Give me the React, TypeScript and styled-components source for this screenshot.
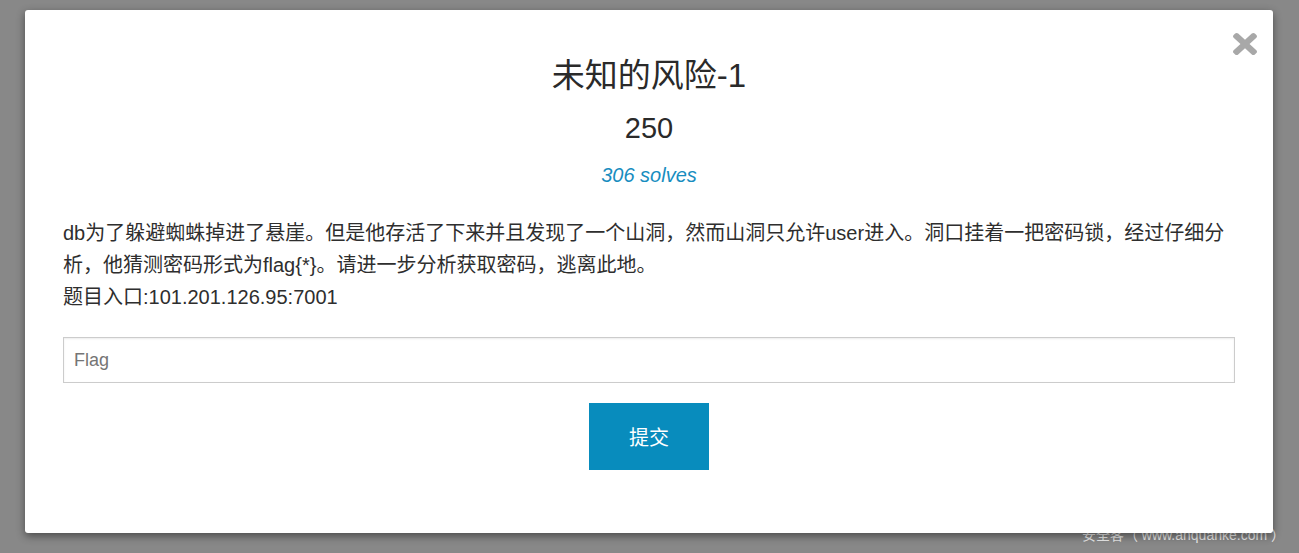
import styled, { createGlobalStyle } from "styled-components";

const GlobalStyle = createGlobalStyle`
	html,
	body {
		margin: 0;
		padding: 0;
		background: #888888;
		font-family: "Liberation Sans", Arial, "Noto Sans CJK SC", sans-serif;
		color: #333333;
	}
`;

const StyledBackdrop = styled.div`
	position: relative;
	min-height: 553px;
	padding: 10px 26px 20px 25px;
	box-sizing: border-box;
	overflow: hidden;
`;

const StyledModal = styled.div`
	position: relative;
	z-index: 2;

	width: 1248px;
	height: 523px;
	box-sizing: border-box;
	padding: 46px 38px 0 38px;

	background: #ffffff;
	border-radius: 3px;
	box-shadow: 0 3px 9px rgba(0, 0, 0, 0.45);

	display: flex;
	flex-direction: column;
	align-items: stretch;
`;

const StyledClose = styled.button`
	position: absolute;
	top: 23px;
	right: 16px;

	width: 24px;
	height: 22px;
	padding: 0;
	border: none;
	background: transparent;
	cursor: pointer;

	svg {
		display: block;
		width: 24px;
		height: 22px;
	}
`;

const StyledTitle = styled.h2`
	margin: 0;
	font-size: 33px;
	line-height: 40px;
	font-weight: normal;
	text-align: center;
	color: #2a2a2a;
`;

const StyledValue = styled.h3`
	margin: 14px 0 0 0;
	font-size: 29px;
	line-height: 37px;
	font-weight: normal;
	text-align: center;
	color: #2a2a2a;
`;

const StyledSolves = styled.div`
	margin-top: 14px;
	font-size: 20px;
	line-height: 28px;
	font-style: italic;
	text-align: center;
	color: #188dbf;
`;

const StyledDescription = styled.div`
	margin-top: 28px;
	font-size: 20px;
	line-height: 32px;
	color: #2e2e2e;

	p {
		margin: 0;
	}
`;

const StyledForm = styled.form`
	margin-top: 24px;
	display: flex;
	flex-direction: column;
	align-items: center;
	gap: 20px;
`;

const StyledInput = styled.input`
	width: 100%;
	height: 46px;
	box-sizing: border-box;
	padding: 0 10px;

	border: 1px solid #cccccc;
	border-radius: 0;
	box-shadow: inset 0 1px 2px rgba(0, 0, 0, 0.075);
	outline: none;

	font-family: "Liberation Sans", Arial, sans-serif;
	font-size: 18px;
	color: #555555;

	::placeholder {
		color: #8c8c8c;
	}
`;

const StyledSubmit = styled.button`
	width: 120px;
	height: 67px;
	border: none;
	border-radius: 0;
	background: #088cbd;
	color: #ffffff;
	font-family: "Liberation Sans", Arial, "Noto Sans CJK SC", sans-serif;
	font-size: 20px;
	cursor: pointer;
`;

const StyledWatermark = styled.div`
	position: absolute;
	z-index: 1;
	right: 14px;
	bottom: 9px;
	font-family: "Liberation Sans", Arial, "Noto Sans CJK SC", sans-serif;
	font-size: 14px;
	line-height: 18px;
	color: rgba(255, 255, 255, 0.85);
	white-space: nowrap;
`;

function CloseIcon() {
	return (
		<svg viewBox="0 80 352 352" preserveAspectRatio="none" aria-hidden="true">
			<path
				fill="#a8a8a8"
				d="M242.72 256l100.07-100.07c12.28-12.28 12.28-32.19 0-44.48l-22.24-22.24c-12.28-12.28-32.19-12.28-44.48 0L176 189.28 75.93 89.21c-12.28-12.28-32.19-12.28-44.48 0L9.21 111.45c-12.28 12.28-12.28 32.19 0 44.48L109.28 256 9.21 356.07c-12.28 12.28-12.28 32.19 0 44.48l22.24 22.24c12.28 12.28 32.2 12.28 44.48 0L176 322.72l100.07 100.07c12.28 12.28 32.2 12.28 44.48 0l22.24-22.24c12.28-12.28 12.28-32.19 0-44.48L242.72 256z"
			/>
		</svg>
	);
}

export default function App() {
	return (
		<>
			<GlobalStyle />
			<StyledBackdrop>
				<StyledModal>
					<StyledClose type="button" aria-label="Close">
						<CloseIcon />
					</StyledClose>
					<StyledTitle>未知的风险-1</StyledTitle>
					<StyledValue>250</StyledValue>
					<StyledSolves>306 solves</StyledSolves>
					<StyledDescription>
						<p>
							db为了躲避蜘蛛掉进了悬崖。但是他存活了下来并且发现了一个山洞，然而山洞只允许user进入。洞口挂着一把密码锁，经过仔细分析，他猜测密码形式为flag{"{*}"}。请进一步分析获取密码，逃离此地。
						</p>
						<p>题目入口:101.201.126.95:7001</p>
					</StyledDescription>
					<StyledForm onSubmit={(e) => e.preventDefault()}>
						<StyledInput type="text" placeholder="Flag" />
						<StyledSubmit type="submit">提交</StyledSubmit>
					</StyledForm>
				</StyledModal>
				<StyledWatermark>安全客（ www.anquanke.com ）</StyledWatermark>
			</StyledBackdrop>
		</>
	);
}
